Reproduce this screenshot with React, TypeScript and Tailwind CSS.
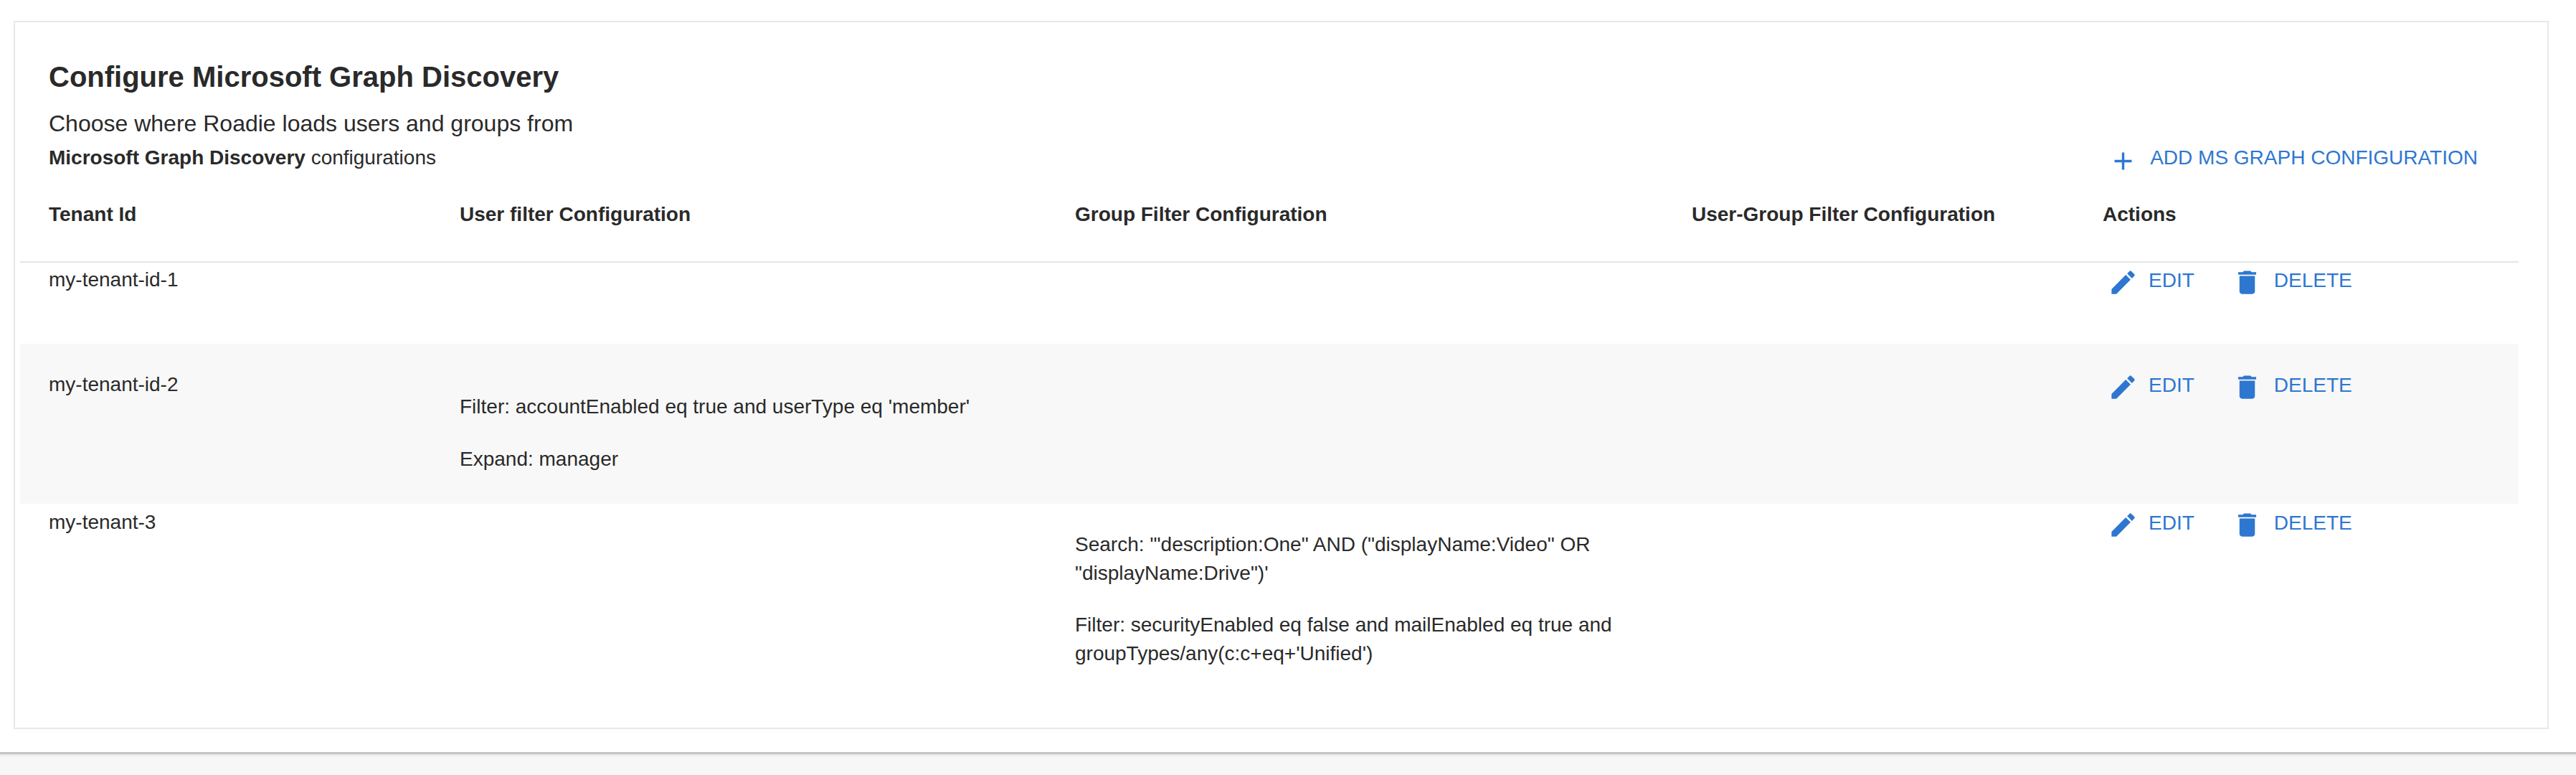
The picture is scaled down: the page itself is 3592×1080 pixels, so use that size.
import React from "react";

const EditIcon = () => (
  <svg viewBox="0 0 24 24" className="w-[43px] h-[43px] shrink-0 mt-[2px] fill-current">
    <path d="M3 17.25V21h3.75L17.81 9.94l-3.75-3.75L3 17.25zM20.71 7.04c.39-.39.39-1.02 0-1.41l-2.34-2.34a.9959.9959 0 0 0-1.41 0l-1.83 1.83 3.75 3.75 1.83-1.83z" />
  </svg>
);
const DeleteIcon = () => (
  <svg viewBox="0 0 24 24" className="w-[43px] h-[43px] shrink-0 mt-[2px] fill-current">
    <path d="M6 19c0 1.1.9 2 2 2h8c1.1 0 2-.9 2-2V7H6v12zM19 4h-3.5l-1-1h-5l-1 1H5v2h14V4z" />
  </svg>
);
const AddIcon = () => (
  <svg viewBox="0 0 24 24" className="w-[41px] h-[41px] shrink-0 mt-[4px] fill-current">
    <path d="M19 13h-6v6h-2v-6H5v-2h6V5h2v6h6v2z" />
  </svg>
);

const Actions = () => (
  <div className="flex items-start text-[#2e77d0] text-[28px] leading-[40px]">
    <button className="flex items-start gap-[14px] ml-[15px]">
      <EditIcon />
      <span className="mt-[1px]">EDIT</span>
    </button>
    <button className="flex items-start gap-[16px] ml-[52px]">
      <DeleteIcon />
      <span className="mt-[1px]">DELETE</span>
    </button>
  </div>
);

const headers = [
  "Tenant Id",
  "User filter Configuration",
  "Group Filter Configuration",
  "User-Group Filter Configuration",
  "Actions",
];

const cols = "grid grid-cols-[573px_858px_860px_573px_620px]";

export default function App() {
  return (
    <div className="h-[1080px] flex flex-col bg-[#f7f7f7] font-['Liberation_Sans',Arial,sans-serif] text-[#2a2a2a] overflow-hidden">
      <div className="h-[1051px] shrink-0 bg-white border-b-[3px] border-[#c4c4c4] shadow-[0_2px_3px_rgba(0,0,0,0.08)] pt-[29px] pl-[19px]">
        <div className="w-[3535px] h-[987px] border-[2px] border-[#e8e8e8] pl-[7px] pt-[52px]">
          <div className="w-[3484px]">
            <div className="pl-[40px] text-[40px] leading-[48px] font-bold">Configure Microsoft Graph Discovery</div>
            <div className="pl-[40px] mt-[21px] text-[32px] leading-[40px]">Choose where Roadie loads users and groups from</div>
            <div className="flex items-center justify-between pl-[40px] pr-[57px] mt-[10px] h-[36px]">
              <div className="text-[28px] leading-[36px]">
                <span className="font-bold">Microsoft Graph Discovery</span> configurations
              </div>
              <button className="flex items-start gap-[17px] text-[#2e77d0] text-[28px] leading-[40px] h-[40px]">
                <AddIcon />
                <span>ADD MS GRAPH CONFIGURATION</span>
              </button>
            </div>

            <div className={`${cols} pt-[41px] pb-[45px] border-b-[2px] border-[#e5e5e5] text-[28px] leading-[40px] font-bold`}>
              {headers.map((h) => (
                <div key={h} className="pl-[40px]">{h}</div>
              ))}
            </div>

            <div className={`${cols} h-[113px] pt-[4px] text-[28px] leading-[40px]`}>
              <div className="pl-[40px]">my-tenant-id-1</div>
              <div />
              <div />
              <div />
              <div className="pl-[32px]"><Actions /></div>
            </div>

            <div className={`${cols} h-[223px] pt-[37px] bg-[#f8f8f8] text-[28px] leading-[40px]`}>
              <div className="pl-[40px]">my-tenant-id-2</div>
              <div className="pl-[40px] pt-[31px]">
                <p>Filter: accountEnabled eq true and userType eq 'member'</p>
                <p className="mt-[33px]">Expand: manager</p>
              </div>
              <div />
              <div />
              <div className="pl-[32px]"><Actions /></div>
            </div>

            <div className={`${cols} pt-[6px] text-[28px] leading-[40px]`}>
              <div className="pl-[40px]">my-tenant-3</div>
              <div />
              <div className="pl-[40px] pr-[40px] pt-[31px]">
                <p>Search: '"description:One" AND ("displayName:Video" OR "displayName:Drive")'</p>
                <p className="mt-[32px]">Filter: securityEnabled eq false and mailEnabled eq true and groupTypes/any(c:c+eq+'Unified')</p>
              </div>
              <div />
              <div className="pl-[32px]"><Actions /></div>
            </div>
          </div>
        </div>
      </div>
    </div>
  );
}
